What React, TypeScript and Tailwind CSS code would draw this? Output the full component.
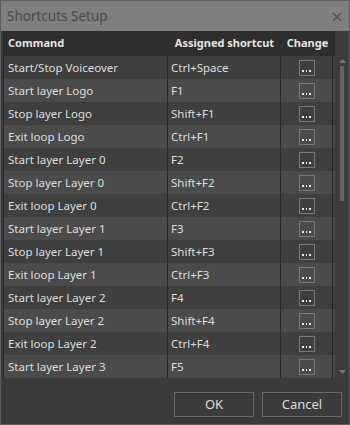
import React from "react";

const rows: [string, string][] = [
  ["Start/Stop Voiceover", "Ctrl+Space"],
  ["Start layer Logo", "F1"],
  ["Stop layer Logo", "Shift+F1"],
  ["Exit loop Logo", "Ctrl+F1"],
  ["Start layer Layer 0", "F2"],
  ["Stop layer Layer 0", "Shift+F2"],
  ["Exit loop Layer 0", "Ctrl+F2"],
  ["Start layer Layer 1", "F3"],
  ["Stop layer Layer 1", "Shift+F3"],
  ["Exit loop Layer 1", "Ctrl+F3"],
  ["Start layer Layer 2", "F4"],
  ["Stop layer Layer 2", "Shift+F4"],
  ["Exit loop Layer 2", "Ctrl+F4"],
  ["Start layer Layer 3", "F5"],
];

export default function App() {
  return (
    <div
      className="w-[350px] h-[425px] flex flex-col border border-[#5e5e5e] bg-[#3b3b3b] text-[11.5px] text-[#dedede]"
      style={{ fontFamily: '"Noto Sans", "Open Sans", Arial, sans-serif' }}
    >
      {/* Title bar */}
      <div className="h-[30px] shrink-0 flex items-center justify-between bg-[#7f7f7f] pl-[6px] pr-[7px]">
        <span className="text-[13.5px] text-[#4a4a4a]">Shortcuts Setup</span>
        <svg width="10" height="10" viewBox="0 0 10 10" className="mt-[1px]">
          <path d="M1 1 L9 9 M9 1 L1 9" stroke="#555" strokeWidth="1.6" />
        </svg>
      </div>

      {/* Table area */}
      <div className="flex h-[347px] shrink-0 pl-[2px]">
        <div className="flex flex-col w-[332px] border-l border-[#2a2a2a]">
          <div className="h-[25px] shrink-0 flex items-center bg-[#2e2e2e] font-bold text-[11px] text-[#e4e4e4]">
            <div className="w-[164px] pl-[4px]">Command</div>
            <div className="w-[113px] text-center">Assigned shortcut</div>
            <div className="w-[53px] text-center">Change</div>
          </div>
          {rows.map(([cmd, key], i) => (
            <div
              key={i}
              className={
                "h-[23px] shrink-0 flex " +
                (i % 2 === 0 ? "bg-[#3f3f3f]" : "bg-[#4b4b4b]")
              }
            >
              <div className="w-[164px] pl-[4px] flex items-center border-r border-[#262626]">
                {cmd}
              </div>
              <div className="w-[113px] pl-[3px] flex items-center border-r border-[#262626]">
                {key}
              </div>
              <div className="w-[52px] flex items-center justify-center border-r border-[#262626]">
                <div className="w-[16px] h-[16px] border border-[#7a7a7a] flex items-end justify-center pb-[3px] gap-[2px]">
                  <span className="w-[1.5px] h-[1.5px] bg-[#e8e8e8]" />
                  <span className="w-[1.5px] h-[1.5px] bg-[#e8e8e8]" />
                  <span className="w-[1.5px] h-[1.5px] bg-[#e8e8e8]" />
                </div>
              </div>
            </div>
          ))}
        </div>
        {/* Scrollbar */}
        <div className="w-[14px] flex flex-col items-center bg-[#3c3c3c] pt-[28px] pb-[4px]">
          <svg width="7" height="4" viewBox="0 0 7 4">
            <path d="M0 4 L3.5 0 L7 4 Z" fill="#777" />
          </svg>
          <div className="w-[4px] h-[135px] bg-[#666] mt-[3px]" />
          <div className="flex-1" />
          <svg width="7" height="4" viewBox="0 0 7 4">
            <path d="M0 0 L3.5 4 L7 0 Z" fill="#777" />
          </svg>
        </div>
      </div>

      {/* Footer */}
      <div className="flex justify-end gap-[8px] pr-[7px] pt-[14px]">
        <button className="w-[80px] h-[25px] border border-[#6a6a6a] text-[13px] text-[#dcdcdc]">
          OK
        </button>
        <button className="w-[80px] h-[25px] border border-[#6a6a6a] text-[13px] text-[#dcdcdc]">
          Cancel
        </button>
      </div>
    </div>
  );
}
